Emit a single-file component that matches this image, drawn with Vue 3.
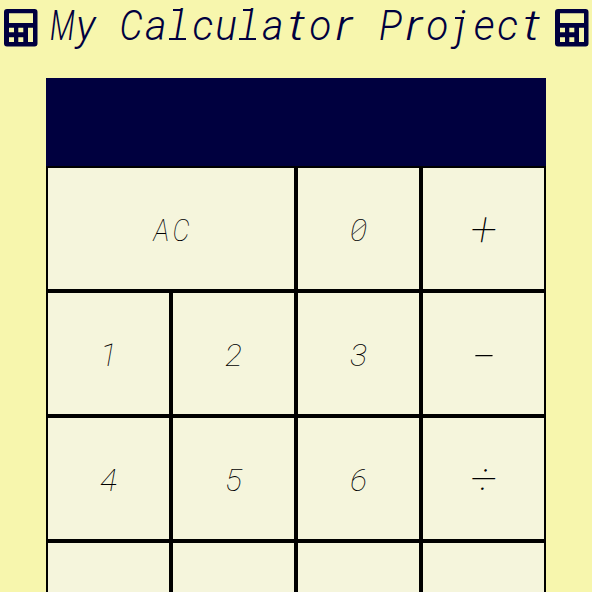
<script setup>
const scale = { M: 0.71, C: 0.88, a: 0.98, u: 0.98, t: 1.3, o: 0.96, r: 1.22, P: 0.92 }
const title = [...'My Calculator Project'].map((ch) => ({
  ch,
  kind: { l: 'ell', j: 'jay', C: 'cap' }[ch],
  sx: scale[ch] ?? 1,
}))

const keys = [
  { label: 'AC', wide: true },
  { label: '0', op: 'zero' },
  { label: '+', op: 'plus' },
  { label: '1' },
  { label: '2' },
  { label: '3' },
  { label: '-', op: 'minus' },
  { label: '4' },
  { label: '5' },
  { label: '6' },
  { label: '÷', op: 'divide' },
  { label: '' },
  { label: '' },
  { label: '' },
  { label: '' },
]
const iconPath =
  'M3 0H30.500Q33.500 0 33.500 3V34.500Q33.500 37.500 30.500 37.500H3Q0 37.500 0 34.500V3Q0 0 3 0Z' +
  'M5 4.200V14H29V4.200ZM5 18.700V23.300H10V18.700ZM14.300 18.700V23.300H19.300V18.700Z' +
  'M5 28.300V33H10V28.300ZM14.300 28.300V33H19.300V28.300ZM24 18.700V33H29V18.700Z'
</script>

<template>
  <main class="page">
    <header class="header">
      <svg class="icon" viewBox="0 0 34 38"><path fill-rule="evenodd" :d="iconPath" /></svg>
      <h1 class="title">
        <span v-for="(c, i) in title" :key="i" class="cell" :class="c.kind"><span class="glyph" :style="{ transform: `scaleX(${c.sx})` }">{{ c.ch }}</span></span>
      </h1>
      <svg class="icon" viewBox="0 0 34 38"><path fill-rule="evenodd" :d="iconPath" /></svg>
    </header>
    <section class="calculator">
      <div class="display"></div>
      <div class="keys">
        <button v-for="(k, i) in keys" :key="i" class="key" :class="[{ wide: k.wide }, k.op]">
          <span v-for="(ch, j) in k.label" :key="j" class="key-cell"><span class="glyph">{{ ch }}</span></span>
        </button>
      </div>
    </section>
  </main>
</template>

<style>
body {
  margin: 0;
  background: #f7f6ad;
}
</style>

<style scoped>
.page {
  height: 592px;
  overflow: hidden;
  background: #f7f6ad;
  font-family: Roboto, sans-serif;
  font-style: italic;
}
.header {
  display: flex;
  justify-content: space-between;
  align-items: flex-start;
  box-sizing: border-box;
  height: 78px;
  padding: 9px 3px 0 4.400px;
  color: #00003f;
}
.icon {
  flex: none;
  width: 34px;
  height: 38px;
  fill: currentColor;
}
.title {
  display: flex;
  margin: -7px 0 0;
  font-size: 41.500px;
  font-weight: 300;
  line-height: 48px;
}
.cell {
  position: relative;
  display: flex;
  justify-content: center;
  width: 23.450px;
  height: 48px;
}
.cap {
  left: -1.400px;
}
.ell {
  left: -1px;
}
.glyph {
  display: block;
}
/* Slab serifs for the narrow letters */
.ell::before,
.ell::after,
.jay::before {
  content: "";
  position: absolute;
  height: 1.500px;
  background: currentColor;
}
.ell::before {
  top: 7px;
  left: 6px;
  width: 9px;
}
.ell::after {
  top: 36px;
  left: 2px;
  width: 17px;
}
.jay::before {
  top: 15px;
  left: 6px;
  width: 9px;
}
.ell::after,
.ell::before,
.jay::before {
  height: 2px;
}
.calculator {
  width: 500px;
  margin: 0 auto;
}
.display {
  height: 88px;
  background: #00003f;
}
.keys {
  display: grid;
  grid-template-columns: repeat(4, 125px);
  grid-auto-rows: 125px;
}
.key {
  display: flex;
  justify-content: center;
  align-items: center;
  margin: 0;
  padding: 2px 0 0;
  border: 2px solid #000;
  border-radius: 0;
  background: #f5f5dc;
  color: #000;
  font: italic 100 32px Roboto, sans-serif;
}
.wide {
  grid-column: span 2;
}
.key-cell {
  position: relative;
  display: flex;
  justify-content: center;
  width: 19.200px;
}
.wide .glyph {
  transform: scaleX(0.85);
}
.zero .key-cell::after {
  content: "";
  position: absolute;
  top: 18px;
  left: 1px;
  width: 17px;
  height: 1px;
  background: #555;
  transform: rotate(-39deg);
}
.plus,
.divide,
.minus {
  font-size: 48px;
}
.minus .glyph {
  transform: scaleX(1.6);
}
</style>
